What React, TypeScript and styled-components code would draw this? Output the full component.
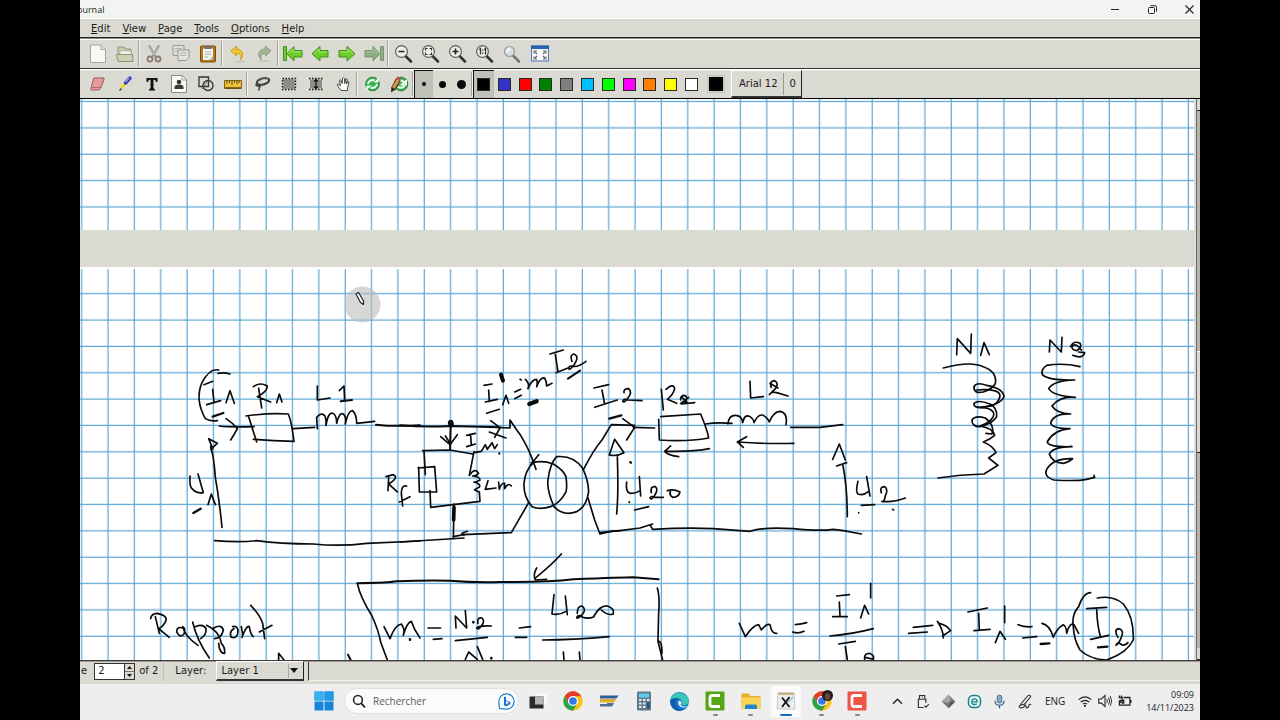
import React from 'react';
import styled, { createGlobalStyle, css } from 'styled-components';

const GlobalStyle = createGlobalStyle`
  * { box-sizing: border-box; }
  body { margin: 0; background: #000; }
  button, input, select { font: inherit; color: inherit; margin: 0; padding: 0; border: 0; background: none; border-radius: 0; }
  svg { display: block; flex: none; }
`;

const face = '#dadad2';
const uiFont = '"DejaVu Sans", sans-serif';
const winFont = '"Open Sans", "Noto Sans", sans-serif';

const Screen = styled.div`
  height: 100vh;
  padding: 0 80px;
  background: #000;
`;
const Desktop = styled.div`
  height: 100%;
  display: flex;
  flex-direction: column;
  overflow: hidden;
  background: ${face};
  color: #1a1a1a;
  font: 10px/14px ${uiFont};
`;
const TitleBar = styled.header`
  flex: none;
  height: 19px;
  display: flex;
  align-items: center;
  justify-content: space-between;
  background: #f3f4f1;
  border-bottom: 1px solid #fff;
  font-family: ${winFont};
`;
const Title = styled.span`
  margin-left: -3px;
  padding-top: 2px;
  font-size: 9px;
`;
const WindowButtons = styled.div`
  display: flex;
`;
const WindowButton = styled.button`
  width: 37px;
  height: 18px;
  display: flex;
  align-items: center;
  justify-content: center;
  &:last-child { width: 29px; padding-left: 8px; }
`;
const MenuBar = styled.nav`
  flex: none;
  height: 19px;
  display: flex;
  align-items: center;
  gap: 12px;
  padding-left: 11px;
  padding-top: 1px;
  border-bottom: 1px solid #222;
`;
const MenuItem = styled.button`
  line-height: 16px;
`;
const Toolbar = styled.div<{ $last?: boolean }>`
  flex: none;
  height: ${p => (p.$last ? 30 : 31)}px;
  display: flex;
  align-items: stretch;
  padding-left: 4px;
  border-top: 1px solid ${p => (p.$last ? '#fff' : '#8c8984')};
  border-bottom: 1px solid ${p => (p.$last ? '#000' : '#333')};
  box-shadow: inset 0 1px ${p => (p.$last ? '#e6e6e0' : '#fff')};
`;
const ToolButton = styled.button<{ $wide?: boolean }>`
  width: ${p => (p.$wide ? 31 : 27)}px;
  flex: none;
  display: flex;
  align-items: center;
  justify-content: center;
`;
const Divider = styled.span`
  flex: none;
  width: 2px;
  margin: 2px 0;
  border-left: 1px solid #a3a19b;
  border-right: 1px solid #f4f4f0;
`;
const pressed = css`
  background: #c0c0b9;
  box-shadow: inset 1px 1px #111;
`;
const DotButton = styled.button<{ $on?: boolean }>`
  width: 19px;
  flex: none;
  display: flex;
  align-items: center;
  justify-content: center;
  ${p => p.$on && pressed}
`;
const Dot = styled.span<{ $size: number }>`
  width: ${p => p.$size}px;
  height: ${p => p.$size}px;
  border-radius: 50%;
  background: #0a0a0a;
`;
const Swatches = styled.div`
  width: 229px;
  flex: none;
  display: flex;
`;
const SwatchButton = styled.button<{ $on?: boolean }>`
  flex: 1;
  display: flex;
  align-items: center;
  justify-content: center;
  ${p => p.$on && pressed}
`;
const Swatch = styled.span<{ $color: string }>`
  width: 13px;
  height: 13px;
  border: 1px solid #2a2a22;
  background: ${p => p.$color};
`;
const CurrentColor = styled.button`
  align-self: center;
  width: 18px;
  height: 18px;
  margin-left: 5px;
  margin-right: 6px;
  border: 2px solid #c9c9c2;
  background: #000;
`;
const FontButton = styled.button`
  width: 71px;
  flex: none;
  display: flex;
  align-items: center;
  border: 1px solid #fff;
  border-right: 1px solid #222;
  border-bottom: 2px solid #333;
`;
const FontName = styled.span`
  padding: 4px 5px 4px 7px;
  border-right: 1px solid #9a9892;
`;
const FontSize = styled.span`
  padding-left: 6px;
`;

const Work = styled.main`
  flex: 1 1 0;
  min-height: 0;
  display: flex;
`;
const Pages = styled.div`
  flex: 1;
  min-width: 0;
  display: flex;
  flex-direction: column;
  gap: 37px;
  overflow: hidden;
`;
const Paper = styled.section<{ $tail?: boolean }>`
  flex: ${p => (p.$tail ? 'none' : '1 1 0')};
  height: ${p => (p.$tail ? '131px' : 'auto')};
  min-height: 0;
  overflow: hidden;
  background: #fff;
  svg { width: 100%; height: 100%; }
`;
const ScrollBar = styled.div`
  flex: none;
  width: 6px;
  display: flex;
  flex-direction: column;
  border-left: 2px solid #dcdcd8;
  background: #b4b3ac;
  box-shadow: inset 1px 0 #6b6a66;
`;
const ScrollEnd = styled.button`
  height: 12px;
  flex: none;
  margin-left: 1px;
  background: ${face};
  border-bottom: 1px solid #222;
`;
const ScrollTrack = styled.div`
  flex: 1;
  margin-left: 1px;
  display: flex;
  flex-direction: column;
`;
const TrackSpace = styled.span<{ $share: number }>`
  flex: ${p => p.$share};
`;
const Thumb = styled.span`
  flex: 100;
  background: ${face};
  border-top: 1px solid #fff;
  border-bottom: 1px solid #222;
`;

const StatusBar = styled.footer`
  flex: none;
  height: 23px;
  display: flex;
  align-items: center;
  padding-bottom: 2px;
  border-top: 1px solid #3c3c3a;
  box-shadow: inset 0 1px #9c9b96;
`;
const PageLabel = styled.label`
  display: flex;
  align-items: center;
  gap: 7px;
  padding-left: 1px;
`;
const Spin = styled.span`
  width: 41px;
  height: 17px;
  display: flex;
  border: 1px solid #333;
  background: #fff;
`;
const SpinInput = styled.input`
  width: 29px;
  padding-left: 3px;
  outline: none;
`;
const SpinArrows = styled.span`
  flex: 1;
  display: flex;
  flex-direction: column;
  border-left: 1px solid #333;
  background: ${face};
`;
const SpinArrow = styled.button`
  flex: 1;
  display: flex;
  align-items: center;
  justify-content: center;
  & + & { border-top: 1px solid #777; }
`;
const PageTotal = styled.span`
  padding: 3px 5px 3px 4px;
  border-right: 1px solid #c0c0ba;
`;
const LayerLabel = styled.label`
  display: flex;
  align-items: center;
  gap: 10px;
  padding-left: 11px;
`;
const LayerBox = styled.span`
  width: 88px;
  height: 20px;
  display: flex;
  align-items: center;
  justify-content: space-between;
  border: 1px solid #fff;
  border-right: 1px solid #222;
  border-bottom: 2px solid #333;
`;
const LayerSelect = styled.select`
  appearance: none;
  width: 72px;
  padding-left: 4px;
  border-right: 1px solid #aaa8a2;
  outline: none;
`;
const LayerArrow = styled.span`
  padding-right: 5px;
`;
const Message = styled.output`
  align-self: stretch;
  flex: 1;
  margin: 1px 0 0 4px;
  border-left: 1px solid #333;
  border-bottom: 1px solid #f4f4f0;
`;

const TaskBar = styled.div`
  flex: none;
  height: 37px;
  display: flex;
  align-items: center;
  background: #eeeeee;
  border-top: 1px solid #d6d6d4;
  padding: 0 6px 2px 234px;
  font-family: ${winFont};
`;
const TaskButton = styled.button<{ $active?: boolean }>`
  flex: 1;
  height: 31px;
  display: flex;
  align-items: center;
  justify-content: center;
  position: relative;
  ${p => p.$active && css`
    background: linear-gradient(#fafafa, #fafafa) center / 30px 100% no-repeat;
  `}
`;
const Running = styled.span<{ $active?: boolean }>`
  position: absolute;
  bottom: 1px;
  width: ${p => (p.$active ? 12 : 5)}px;
  height: 2px;
  border-radius: 1px;
  background: ${p => (p.$active ? '#0f6cbd' : '#858585')};
`;
const Search = styled.label`
  width: 175px;
  height: 26px;
  flex: none;
  display: flex;
  align-items: center;
  margin-left: 10px;
  padding: 0 3px 0 7px;
  border: 1px solid #e0e0e0;
  border-radius: 13px;
  background: #fbfbfb;
`;
const SearchInput = styled.input`
  flex: 1;
  min-width: 0;
  padding-left: 7px;
  outline: none;
  &::placeholder { color: #5c5c5c; opacity: 1; }
`;
const Apps = styled.div`
  width: 355px;
  flex: none;
  display: flex;
  margin-left: 1px;
`;
const Tray = styled.div`
  display: flex;
  align-items: center;
  margin-left: auto;
`;
const TrayIcons = styled.div`
  width: 154px;
  display: flex;
`;
const Language = styled.button`
  width: 34px;
`;
const Network = styled.button`
  width: 54px;
  margin-left: 6px;
  margin-right: 14px;
  display: flex;
  align-items: center;
  justify-content: space-between;
`;
const Clock = styled.button`
  font-size: 9px;
  line-height: 13px;
  text-align: right;
`;
const ClockLine = styled.span`
  display: block;
`;

/* Toolbar icons */
const Icon = ({ children, size = 20 }: { children: React.ReactNode; size?: number }) => (
  <svg width={size} height={size} viewBox="0 0 20 20" fill="none" aria-hidden="true">{children}</svg>
);

const NewIcon = () => (
  <Icon><path d="M2.500 1H13l4.500 4.500V18.500H2.500z" fill="#f8f8f7" stroke="#a5a5a0" /><path d="M13 1V5.500h4.500" fill="#ddd" stroke="#a5a5a0" /></Icon>
);
const OpenIcon = () => (
  <Icon><path d="M3 16V3h6l1.500 2H16v5" fill="#c9ccae" stroke="#8e9474" /><path d="M5 7h11v5H5z" fill="#f2f2ec" stroke="#a0a590" strokeWidth=".6" /><path d="M1.500 10.500h16L18 17.500H3z" fill="#cdd1b2" stroke="#8e9474" /></Icon>
);
const CutIcon = () => (
  <Icon><path d="M5 1.500l6.500 11M15 1.500L8.500 12.500" stroke="#8d8d89" strokeWidth="2.200" /><path d="M5 2l6 9M15 2L9 11" stroke="#d0d0cc" strokeWidth=".8" /><circle cx="6" cy="15" r="2.500" stroke="#8f7d73" strokeWidth="1.800" /><circle cx="14" cy="15" r="2.500" stroke="#8f7d73" strokeWidth="1.800" /></Icon>
);
const CopyIcon = () => (
  <Icon><path d="M2 1.500h11v10H2z" fill="#dededa" stroke="#9a9a96" /><path d="M4 4.500h7M4 7h7" stroke="#b2b2ae" /><path d="M7 6h11v7.500L15 16.500H7z" fill="#e3e3df" stroke="#94948f" /><path d="M9 9h7M9 11.500h6" stroke="#b2b2ae" /></Icon>
);
const PasteIcon = () => (
  <Icon><rect x="2.500" y="2" width="15" height="16" rx="1" fill="#b5761c" stroke="#7c4d0c" /><path d="M5 4.500h10V16H5z" fill="#f4f4f2" /><path d="M7 8h6M7 10.500h6M7 13h3" stroke="#aaa" /><path d="M6.500 5V3q0-1 1-1H9q1-2 2 0h1.500q1 0 1 1v2z" fill="#70706a" /><path d="M15 12v4h-4z" fill="#bbb" /></Icon>
);
const UndoIcon = () => (
  <Icon><ellipse cx="13" cy="17.500" rx="5" ry="1" fill="#c4c4bc" /><path d="M4 7L9.500 2v3c6 0 8 6 4 11 1.500-4.500 0-6.500-4-6.500V12z" fill="#f2c52a" stroke="#c49310" strokeWidth=".8" /></Icon>
);
const RedoIcon = () => (
  <Icon><ellipse cx="10" cy="17" rx="6" ry="1" fill="#c6c7bd" /><path d="M17 7L11.500 2v3c-7 0-9 6-4 11-1.500-4.500 0-6.500 4-6.500V12z" fill="#9fb691" stroke="#81967a" strokeWidth=".8" /></Icon>
);
const ArrowIcon = ({ flip, bar, dull }: { flip?: boolean; bar?: boolean; dull?: boolean }) => (
  <svg width="22" height="20" viewBox="0 0 22 20" aria-hidden="true">
    <g transform={flip ? 'translate(22 0) scale(-1 1)' : undefined} fill={dull ? '#8ead83' : '#6ccc28'} stroke={dull ? '#789572' : '#41901a'} strokeLinejoin="round">
      {bar && <path d="M1.500 2.500h3v14h-3z" />}
      <path d={bar ? 'M5 9.700L12 2.500v4h8v6.500h-8v4z' : 'M3 9.700L11 2.500v4h8v6.500h-8v4z'} />
      <path d={bar ? 'M6.500 9.700L11 5v3h8' : 'M5 9.700L10 5v3h8'} fill="none" stroke={dull ? '#b0c7a6' : '#b6f07d'} strokeWidth=".8" />
    </g>
  </svg>
);
const LensIcon = ({ kind }: { kind: 'out' | 'fit' | 'in' | 'one' | 'set' }) => (
  <Icon>
    <path d="M12.500 12l5.500 5.500" stroke={kind === 'set' ? '#777' : '#333'} strokeWidth="2.600" strokeLinecap="round" />
    <circle cx="8.500" cy="7.500" r={kind === 'set' ? 5 : 5.9} fill={kind === 'set' ? '#d5dde4' : '#eeeeea'} stroke={kind === 'set' ? '#9a9a98' : '#5d5d5a'} strokeWidth="1.200" />
    {kind === 'out' && <path d="M5.500 7.500h6" stroke="#222" strokeWidth="1.500" />}
    {kind === 'in' && <path d="M5.500 7.500h6M8.500 4.500v6" stroke="#222" strokeWidth="1.600" />}
    {kind === 'fit' && <path d="M5.500 6.500V4.500h2M9.500 4.500h2v2M11.500 8.500v2h-2M7.500 10.500h-2v-2" stroke="#333" strokeWidth="1.100" />}
    {kind === 'one' && <path d="M5.200 5.500l1.300-1V10.500M10.200 5.500l1.300-1V10.500M8.700 5.500v1.200M8.700 8.500v1.200" stroke="#333" strokeWidth="1.300" />}
    {kind === 'set' && <path d="M6 8.500q0-3 3-4" stroke="#fff" strokeWidth="1.500" />}
  </Icon>
);
const FullIcon = () => (
  <Icon><rect x="1.500" y="2" width="17" height="15" fill="#f5f7fa" stroke="#4775b5" /><path d="M1 1.500h18V5H1z" fill="#2b62ae" /><path d="M4 9.500V7h3M13 7h3v2.500M16 12.500V15h-3M7 15H4v-2.500M5 8l2 2M15 8l-2 2M15 14l-2-2M5 14l2-2" stroke="#666" strokeWidth="1.100" /></Icon>
);
const EraserIcon = () => (
  <Icon><path d="M6.500 4h9q1 0 .5 1.200l-3.500 9.300q-.5 1.500-2 1.500h-7q-1 0-.5-1.500L5.500 5q.2-1 1-1z" fill="#ea9a9a" stroke="#91595c" /><path d="M3 13.500h9.500l3.500-8" stroke="#b56d70" /></Icon>
);
const HighlighterIcon = () => (
  <Icon><path d="M6.500 14l5-6" stroke="#e6dd27" strokeWidth="3.500" /><path d="M10.500 9l4.500-5" stroke="#3a3fb5" strokeWidth="3.500" strokeLinecap="round" /><path d="M10.500 8l3.500-4" stroke="#a2a8f2" strokeWidth="1.200" /><path d="M4.500 16.500l2-2" stroke="#333" strokeWidth="1.300" /></Icon>
);
const TextIcon = () => (
  <Icon><path d="M4.500 4h11v4H14q-.3-2-1.500-2.200h-1V14q0 1 1.500 1.200V16.500H7V15.200q1.500-.2 1.500-1.200V5.800h-1Q6.300 6 6 8H4.500z" fill="#111" /></Icon>
);
const ImageIcon = () => (
  <Icon><path d="M2.500 1.500h11l4 4v13h-15z" fill="#fafaf8" stroke="#888" /><path d="M13 1.500V6h4.500" stroke="#999" /><circle cx="10" cy="8" r="2.300" fill="#333" /><path d="M5.500 15v-2q0-2.500 4.500-2.500t4.500 2.500v2z" fill="#3a3a3a" /></Icon>
);
const ShapesIcon = () => (
  <Icon><path d="M3 3h9.500v9.500H3z" stroke="#333" strokeWidth="1.300" /><circle cx="12" cy="11.500" r="5" stroke="#333" strokeWidth="1.300" /><path d="M6 15L13 5" stroke="#555" strokeWidth=".8" /></Icon>
);
const RulerIcon = () => (
  <Icon><path d="M1.500 6.500h17v8h-17z" fill="#edc23a" stroke="#80601a" /><path d="M2 14h16" stroke="#654a12" strokeWidth="1.500" /><path d="M4 7v3M6.500 7v2M9 7v4M11.500 7v2M14 7v3M16 7v2" stroke="#5a4614" /></Icon>
);
const LassoIcon = () => (
  <Icon><ellipse cx="11" cy="7.500" rx="6.300" ry="3" stroke="#444" strokeWidth="2.200" transform="rotate(-15 11 7.500)" /><path d="M4.500 9.500q-1.500 3 2 2.500 2 1 0 4.500M5 10.500l4 2" stroke="#444" strokeWidth="1.500" /><path d="M6 8q5-4 10-3" stroke="#bbb" strokeWidth=".8" /></Icon>
);
const RectSelectIcon = () => (
  <Icon><path d="M3.500 4.500h13v11h-13z" fill="#8b8b87" stroke="#dadad2" strokeWidth="1.400" /><path d="M3.500 4.500h13v11h-13z" stroke="#111" strokeWidth="1.400" strokeDasharray="1.500 1.500" /></Icon>
);
const VerticalSpaceIcon = () => (
  <Icon><path d="M4 5.500h12v9H4z" fill="#8e8e8a" /><path d="M3 4.500h14M3 15.500h14" stroke="#111" strokeWidth="1.300" strokeDasharray="1.500 1.500" /><path d="M10 6v8M8 7.500L10 5.500 12 7.500M8 12.500l2 2 2-2" stroke="#111" strokeWidth="1.200" /></Icon>
);
const HandIcon = () => (
  <Icon><path d="M8 16.500l-3.500-5q-1-1.500 1-1.500l2 2-1-5.500q.5-1.500 1.600 0l1 3 .4-5q1-1.500 2 0l.3 5 1-4.500q1.300-1 1.300 1l-.6 4 1.200-2.500q1.400-.5 1.200 1.500L14.500 14v2.500z" fill="#fff" stroke="#333" strokeWidth=".9" /></Icon>
);
const DefaultIcon = ({ pen }: { pen?: boolean }) => (
  <Icon>
    <circle cx={pen ? 12 : 10.5} cy="10" r="6.800" fill="#35b24d" stroke="#228138" />
    <path d={pen ? 'M9 12.500a4 4 0 0 0 6.500-1' : 'M6 10a4.500 4.500 0 0 1 6.500-3.500'} stroke="#f2fff2" strokeWidth="2" />
    <path d={pen ? 'M10 7a4 4 0 0 1 5 1l-2 2.500h4V6' : 'M15 10a4.500 4.500 0 0 1-6.500 3.500'} stroke="#f2fff2" strokeWidth="2" />
    {!pen && <path d="M11.500 8.500h5V4zM9.500 11.500h-5V16z" fill="#f2fff2" />}
    {pen && <><path d="M4 15.500L9.500 5" stroke="#5e4220" strokeWidth="5" /><path d="M4.500 14L9.500 5" stroke="#d29958" strokeWidth="2.800" /><path d="M9 6l1.300-2.600" stroke="#bc5555" strokeWidth="4.500" /><path d="M2.500 13.500L2 18.500 6 15.500z" fill="#222" /></>}
  </Icon>
);

/* Handwriting: every group holds strokes traced at three units to the pixel. */
type Stroke = string | [string, number];
const ink: { x: number; y: number; strokes: Stroke[] }[] = [
  { x: 180, y: 340, strokes: [
    'M116 90C95 85 78 105 66 128C52 160 56 200 76 236Q90 245 112 242', 'M72 134L98 124M114 100Q130 97 150 102M98 148L102 186M80 194L122 182',
    ['M98 230L130 219', 7], 'M138 188L150 152L163 190', 'M118 258Q150 262 222 260M138 236Q160 250 172 266Q165 280 152 300',
    'M220 140Q240 125 262 138Q262 155 232 170L272 186M236 145L245 204M290 188L298 162L306 186',
    'M198 228Q270 218 325 222Q335 245 342 304Q280 302 220 298M206 230L230 306', 'M340 266L404 262',
    'M412 138L412 180L450 174M478 152L492 138L494 182', ['M482 184L516 180', 6],
    'M412 266L410 232Q425 215 435 228Q440 240 438 256Q445 215 458 220Q470 225 470 250Q478 215 490 222Q500 230 496 252Q505 210 518 212Q530 225 530 250L584 244',
    'M126 562Q118 480 106 412Q102 350 92 320M98 326L86 296L112 310L92 328', 'M30 408Q28 440 36 446Q50 462 70 458M54 402L70 458M84 494L94 462L106 494', ['M40 519L62 506', 7],
    'M104 602Q180 608 230 602Q300 612 400 612Q480 620 560 610L720 603', ['M588 254Q640 260 720 256', 6],
    'M618 410L640 404Q658 412 626 432L652 456M626 412L624 452M680 438Q664 434 664 460L668 498M658 486L690 470',
  ] },
  { x: 400, y: 340, strokes: [
    ['M0 256Q80 262 150 258L300 262', 6], 'M290 262L330 264L330 240Q350 270 362 286Q385 325 394 350L408 388M392 374L416 344',
    ['M152 248L153 252', 17], ['M152 258L150 330', 6], ['M122 290L150 314L172 284M136 288L152 312', 5],
    'M68 332L150 330L218 342M222 335L208 406M72 332L76 404M54 384L104 380L110 456L58 456L56 382M90 452L92 502L240 484L238 456',
    'M210 404Q225 382 236 400Q230 408 218 408Q240 410 240 420Q225 428 222 426Q245 432 238 442Q225 448 224 450L238 456',
    'M264 422L256 448L288 444M296 426L298 448Q304 428 314 430L314 446Q324 426 334 438',
    'M162 492L160 596', ['M162 502L161 540', 11], 'M0 606L192 594M160 590L190 584L334 578L386 488M202 574L186 580L192 586',
    'M200 286L226 280M212 288L214 316M200 320L226 312M222 338L244 334L256 314L262 328L276 308L284 326L292 314', ['M298 340v1', 6],
    'M272 242Q290 255 300 264L284 292M268 276L318 294', 'M252 136L276 132M266 150L268 184M256 186L292 178M308 194L318 166L326 190', ['M303 104L309 122', 12], ['M260 220L298 208', 5],
    'M344 156L362 148M344 176L364 166M360 118l4 2', 'M376 118Q390 130 384 146Q395 118 410 118Q414 130 410 140Q420 112 434 114Q440 125 440 138L456 130', ['M388 192L410 184', 13],
    'M450 42L490 30M466 44L474 96M468 98L504 84M516 64Q508 44 522 42Q536 48 528 64Q518 84 508 88Q504 78 514 78Q532 84 558 64', ['M504 116L540 92', 6],
    'M394 368Q430 360 460 372Q490 390 498 410Q502 440 498 456Q480 490 452 500Q420 510 396 500Q370 470 372 430Q376 390 400 368',
    'M470 350Q520 345 548 385Q565 420 566 455Q560 500 530 515Q490 530 462 500Q440 450 444 420Q450 370 470 350', 'M550 390Q580 330 606 300L634 254L704 256',
    'M564 474L584 540L600 582Q640 572 660 572M582 144L626 134M606 150L614 192M584 202L652 180', ['M628 236L664 226', 7], 'M668 236L704 262L680 300',
    'M650 522Q656 460 652 346M628 345L644 298L672 338Q650 350 628 345M690 366l4 2', 'M484 642Q460 670 404 716M410 684Q398 705 406 720L440 718',
  ] },
  { x: 620, y: 360, strokes: [
    'M12 98Q10 86 26 86Q38 96 24 114Q12 130 8 124Q10 114 24 120L66 122M40 202L104 204', 'M20 366Q16 396 30 400Q46 402 60 392M58 350L62 408M94 398Q90 378 106 380Q116 388 104 406Q94 422 90 414Q94 406 104 412L130 412M142 392Q160 386 180 396Q176 412 158 412Q146 405 152 392',
    ['M28 426v1M32 307v1', 6], ['M44 450L86 440', 5], 'M0 512L60 504L98 492M92 498L98 508Q200 502 280 506L390 514Q430 500 520 506Q600 514 640 508L670 512L724 522M0 512Q-30 514 -60 518',
    'M124 88L130 150M138 88Q160 68 164 86Q160 104 142 118L170 130M182 120Q180 106 194 106Q206 112 194 128L184 132L224 128M184 110L204 130M182 130L206 112',
    'M116 178L118 240Q200 246 266 234Q262 210 242 162L122 170M256 192Q290 186 336 190', 'M324 192Q326 166 346 166Q366 166 368 188Q374 160 390 170Q400 176 402 188Q415 160 430 166Q445 176 448 186Q460 155 480 154Q504 158 498 194',
    'M512 202L600 202L668 194M268 266Q220 276 136 274M152 258L134 274Q145 286 176 290M522 250Q430 252 352 246M380 230L352 246L370 262',
    'M390 64L392 114L430 110M454 82Q446 64 464 62Q478 70 466 86L448 104Q454 94 470 98L504 108M450 70L474 84', 'M682 470Q682 380 668 312M650 318L680 308M638 298L658 252L676 300',
    'M714 364Q706 396 714 402Q730 408 744 396M740 350L750 408M784 398Q778 380 794 380Q806 388 796 408Q792 430 786 424Q820 428 856 414', ['M724 436L764 434', 5], ['M716 458v1M818 448l3 2', 5],
  ] },
  { x: 920, y: 320, strokes: [
    'M110 104L112 56L152 100L154 42M182 106L192 68L208 104', 'M70 144Q150 122 190 140Q232 155 226 190Q220 205 190 216Q160 222 162 200Q170 185 200 196Q250 205 252 230Q245 250 200 260Q160 268 162 250Q175 238 210 252Q232 262 230 290Q220 310 180 320Q155 320 156 300Q165 285 196 294Q225 315 216 342L198 340',
    'M170 210Q240 205 240 228Q236 250 214 258Q180 262 175 262C240 262 232 300 180 318Q220 325 224 346Q210 358 190 366Q220 378 228 398L206 414L234 436L192 462Q120 464 54 474',
    'M388 96L390 60L424 96L426 52', ['M452 80Q460 60 480 70Q488 82 470 92Q455 90 456 80Q466 65 484 90M476 96L494 98Q490 118 458 106', 5],
    'M480 140Q430 128 380 136Q360 150 368 165Q390 182 464 180Q400 182 386 206Q400 228 466 232Q420 228 396 258Q410 280 452 282Q400 280 392 310Q400 326 450 326Q400 330 382 366Q385 382 456 380Q400 380 388 402Q396 428 430 430Q450 425 458 416Q400 414 380 448Q370 470 402 480Q470 484 500 478L524 472L522 466',
  ] },
  { x: 80, y: 560, strokes: [
    'M212 176Q214 160 232 160Q262 166 258 182Q250 200 236 206L268 232M226 170L238 220M308 204Q290 198 290 216Q300 236 312 222Q318 205 308 200Q315 230 354 256',
    'M338 186Q350 240 388 294M346 200Q370 190 378 206Q380 225 362 236M380 196Q420 215 424 250Q436 262 434 280Q418 280 416 250M398 206Q425 190 430 210Q425 235 404 236',
    'M462 206Q446 214 454 232Q474 238 474 210Q470 196 458 200M484 200Q490 228 486 232Q500 195 508 200Q512 225 520 230M512 136Q540 165 548 190L554 236M538 216L576 196M596 300L596 280L612 300', ['M804 284L812 300', 6],
  ] },
  { x: 340, y: 560, strokes: [
    ['M52 70Q150 68 170 64Q260 60 330 62Q400 68 480 66Q620 68 700 58Q850 52 880 52L956 58', 6], 'M52 70Q60 110 96 168Q115 210 122 246L142 300', ['M952 84Q960 110 956 160L954 244L968 300M954 244Q966 240 966 280', 5],
    'M132 200L150 236Q165 195 184 192Q196 208 190 226Q200 188 214 184Q222 210 240 234M264 204L302 204M280 238L306 236', ['M210 238v1M400 186v1M454 294v1', 8],
    'M348 204L346 168L380 204L376 152M414 190Q410 172 426 174Q436 184 424 198Q414 212 410 204Q418 196 454 198M376 298L386 276L412 298M412 260L428 298', ['M346 242L442 232', 5],
    'M538 204L572 200M526 232L560 232M642 104L636 162Q660 166 678 154M676 108L682 164M712 160Q712 138 726 138Q740 148 728 162Q712 180 710 172Q716 162 728 172Q745 178 762 170M762 168Q780 136 802 138Q824 145 820 162Q804 168 784 150', ['M608 240Q700 240 808 230', 5], 'M670 276L672 298M718 276L720 298',
  ] },
  { x: 660, y: 560, strokes: [
    'M238 190L256 230Q280 195 296 194L304 210Q320 190 330 194Q335 222 350 220M406 194Q425 192 440 188M398 216Q415 222 432 214M530 108L568 104M538 126L540 168', ['M518 170L562 170', 5],
    'M602 174L614 136L626 162M632 70L632 114', ['M510 228Q580 222 640 206', 5], 'M536 252L586 244M556 260L562 298M614 298Q612 280 628 280Q644 285 640 298L616 292', 'M760 202L818 196M746 220L802 216M832 184Q850 210 850 234M838 190Q860 195 872 212L848 228',
  ] },
  { x: 900, y: 560, strokes: [
    'M204 156L262 144M236 160L238 210M222 212L270 208M314 138L314 188M286 248L300 214L316 238', 'M354 194Q375 202 396 200M368 234L410 230', ['M422 252L448 250', 7],
    'M426 190Q450 195 460 232Q470 205 490 194Q500 200 500 220Q510 185 522 194L536 220', 'M572 98Q550 98 536 140Q514 165 520 200Q522 240 540 270Q570 298 620 300Q680 280 700 240Q702 170 670 132Q640 105 592 114',
    'M560 146L620 142M590 148Q592 200 602 232M572 238L626 226', ['M594 262L622 260', 7], 'M654 232Q640 210 656 206Q674 210 664 232Q656 252 648 256Q652 244 662 252Q674 260 684 248',
  ] },
];

const Grid = ({ id, top, start }: { id: string; top: number; start: number }) => (
  <>
    <defs>
      <pattern id={id} x={-11.3} y={top - 13} width="26.35" height="26.35" patternUnits="userSpaceOnUse">
        <path d="M13 0V26.350M0 13H26.350" stroke="#5ba6d6" strokeWidth="1.200" />
      </pattern>
    </defs>
    <rect y={start} width="100%" height="100%" fill={`url(#${id})`} />
  </>
);

const Ink = () => (
  <g transform="translate(-80 -267)" fill="none" stroke="#0a0a0a" strokeLinecap="round" strokeLinejoin="round">
    {ink.map(group => (
      <g key={`${group.x}-${group.y}`} transform={`translate(${group.x} ${group.y}) scale(.3333)`}>
        {group.strokes.map((s, i) => (
          <path key={i} d={typeof s === 'string' ? s : s[0]} strokeWidth={typeof s === 'string' ? 5 : s[1]} />
        ))}
      </g>
    ))}
    <circle cx="362.500" cy="304.500" r="18" fill="#bdbdbd" fillOpacity=".6" stroke="none" />
    <path d="M356 294l2.500-1.500 5 8.500v3.500l-3-2z" fill="#fff" stroke="#222" strokeWidth="1.200" />
  </g>
);

/* Taskbar icons */
const WindowsLogo = () => (
  <Icon><path d="M.5.5h9v9h-9zM10.500.5h9v9h-9zM.5 10.500h9v9h-9zM10.500 10.500h9v9h-9z" fill="#1487dc" /><path d="M.5.5h9v9h-9z" fill="#37b1ef" /><path d="M10.500.5h9v9h-9z" fill="#2199e4" /></Icon>
);
const TaskViewIcon = () => (
  <Icon><path d="M7 2.500h12v11H7z" fill="#fafafa" /><path d="M1.500 5.500h14v12h-14z" fill="#2b2b2b" /><path d="M7 5.500h8.500v8H7z" fill="#b5b5b5" /></Icon>
);
const ChromeIcon = ({ avatar }: { avatar?: boolean }) => (
  <Icon size={22}>
    <circle cx="10" cy="10" r="8.800" fill="#fbc116" />
    <path d="M2.400 5.600A8.800 8.800 0 0 1 17.600 5.600H10L6.200 12.200z" fill="#e33b2e" />
    <path d="M2.400 5.600A8.800 8.800 0 0 0 10 18.800L13.800 12.200H6.200z" fill="#2ba24c" />
    <circle cx="10" cy="10" r="4.600" fill="#fff" /><circle cx="10" cy="10" r="3.500" fill="#3478e5" />
    {avatar && <><circle cx="15" cy="5" r="5" fill="#241b1b" /><ellipse cx="15" cy="6" rx="2.500" ry="3" fill="#6c473c" /></>}
  </Icon>
);
const BankIcon = () => (
  <Icon><path d="M1 4.500h18.500l-2 3H1z" fill="#2b5f96" /><path d="M1 8h16l-2 3.500H1z" fill="#dfae2c" /><path d="M8 12h7l-2 3.500H1V13h7z" fill="#4a7195" /></Icon>
);
const CalcIcon = () => (
  <Icon><rect x="3" y=".5" width="14" height="19" rx="1" fill="#62798a" /><path d="M5 2.500h10v4H5z" fill="#58cff0" /><path d="M5 9h2.500M9 9h2.500M13 9h2.500M5 12.500h2.500M9 12.500h2.500M5 16h2.500M9 16h2.500" stroke="#e5edf2" strokeWidth="2.200" /><path d="M13 11.500h2.500v6H13z" fill="#144f85" /></Icon>
);
const EdgeIcon = () => (
  <Icon size={21}><circle cx="10" cy="10" r="9" fill="#1678cc" /><path d="M1.200 9A9 9 0 0 1 19 9.500Q18.500 14 13 13.500q-2-.5-1-2Q12.500 8 9 7 4 6 1.200 9z" fill="#38c7b5" /><path d="M1.200 9Q5 6 9 7 5 9 6.500 13q2 5 8 4.600Q10 20 6 18 1 15 1.200 9z" fill="#125da8" /><path d="M9.500 9q-2 3 1.500 6 3.500 1.500 6.500-.5-5 1-6.500-1.500.8-1 .8-2-.6-1.800-2.300-2z" fill="#eef6fb" /></Icon>
);
const CamtasiaIcon = ({ color }: { color: string }) => (
  <Icon><rect x=".5" y=".5" width="19" height="19" rx="1" fill={color} /><path d="M15 4.500H7Q5 4.500 5 7v6q0 2.500 2 2.500h8" stroke="#fff" strokeWidth="2.800" /></Icon>
);
const FolderIcon = () => (
  <Icon><path d="M.5 2.500h7l2 2.500h9.500q.5 0 .5.800V18H.5z" fill="#e9ad2a" /><path d="M.5 6.500h19V18H.5z" fill="#fbd45c" /><path d="M4 18v-3q0-1.500 1.500-1.500h9q1.500 0 1.500 1.500v3z" fill="#2286c7" /></Icon>
);
const XournalIcon = () => (
  <Icon><path d="M2 2h16l1 16H1z" fill="#eceeed" stroke="#b7b9b6" strokeWidth=".7" /><path d="M2 1.500h16V4H2z" fill="#c7b37e" /><path d="M6 6.500l7.500 9.500M13.500 6L6 16" stroke="#111" strokeWidth="1.800" /><path d="M11 12l6-6" stroke="#86b6d9" strokeWidth="1.200" /></Icon>
);
const GlassIcon = () => (
  <Icon size={14}><circle cx="8.500" cy="8.500" r="6.300" stroke="#222" strokeWidth="2.200" /><path d="M13 13l5.500 6" stroke="#222" strokeWidth="2.600" /></Icon>
);
const BingIcon = () => (
  <Icon size={17}><path d="M2 18.500Q1 14 1 10A9 9 0 1 1 10 19Q5 18.500 2 18.500z" fill="#fff" stroke="#1d80ca" strokeWidth="1.500" /><path d="M7 4v10.500l2.500 1.500 5-3v-2.500L9.500 8.500V5z" fill="#1774cf" /><path d="M9.500 9.500l3.500 1.500-3.500 2.500z" fill="#fff" /></Icon>
);
const TrayIcon = ({ kind }: { kind: string }) => (
  <Icon size={15}>
    {kind === 'Show hidden icons' && <path d="M4 13l6-6 6 6" stroke="#222" strokeWidth="1.800" />}
    {kind === 'USB' && <><path d="M6 2h7v5H6zM4.500 7h10v11h-10z" stroke="#333" strokeWidth="1.600" /><path d="M9 4h1.500" stroke="#333" strokeWidth="1.500" /><circle cx="15" cy="15.500" r="4" fill="#eee" /><path d="M12.500 15.500l2 2 4-4" stroke="#333" strokeWidth="1.500" /></>}
    {kind === 'Driver' && <><path d="M10 1l9 9-9 9-9-9z" fill="#777" /><path d="M10 1L1 10l9 2 3-5z" fill="#a6a6a6" /><path d="M10 19l9-9-7 1z" fill="#555" /></>}
    {kind === 'Antivirus' && <><rect x="2" y="2" width="16" height="16" rx="6" fill="#e9f7f6" stroke="#168489" strokeWidth="2" /><path d="M6.500 10.500h7Q13.500 6.500 10 6.500T6.500 10.500 10 14q2 0 3-1" stroke="#168489" strokeWidth="1.800" /></>}
    {kind === 'Microphone' && <><rect x="7" y="1.500" width="6" height="10.500" rx="3" fill="#8ba8c8" stroke="#3b638f" strokeWidth="1.200" /><path d="M4 9q0 6 6 6t6-6M10 15v4" stroke="#35577e" strokeWidth="1.600" /></>}
    {kind === 'Pen' && <path d="M4 13L13 2.500q3-2 4 1L9 13q-4 3-5 0zM4 14q-5 4 0 4.500 4 0 5-3t2 3q3 0 3.500-3t3-1" stroke="#333" strokeWidth="1.400" />}
  </Icon>
);

const colors = [
  ['Black', '#000000'], ['Blue', '#3333cc'], ['Red', '#ff0000'], ['Green', '#008000'], ['Gray', '#808080'], ['Light blue', '#00c0ff'],
  ['Light green', '#00ff00'], ['Magenta', '#ff00ff'], ['Orange', '#ff8000'], ['Yellow', '#ffff00'], ['White', '#ffffff'],
];
const fileTools: [string, React.ReactNode][][] = [
  [['New', <NewIcon />], ['Open', <OpenIcon />]],
  [['Cut', <CutIcon />], ['Copy', <CopyIcon />], ['Paste', <PasteIcon />]],
  [['Undo', <UndoIcon />], ['Redo', <RedoIcon />]],
  [['First page', <ArrowIcon bar />], ['Previous page', <ArrowIcon />], ['Next page', <ArrowIcon flip />], ['Last page', <ArrowIcon flip bar dull />]],
  [['Zoom out', <LensIcon kind="out" />], ['Page width', <LensIcon kind="fit" />], ['Zoom in', <LensIcon kind="in" />], ['Normal size', <LensIcon kind="one" />], ['Set zoom', <LensIcon kind="set" />], ['Fullscreen', <FullIcon />]],
];
const penTools: [string, React.ReactNode][][] = [
  [['Eraser', <EraserIcon />], ['Highlighter', <HighlighterIcon />], ['Text', <TextIcon />], ['Image', <ImageIcon />], ['Shapes', <ShapesIcon />], ['Ruler', <RulerIcon />]],
  [['Select region', <LassoIcon />], ['Select rectangle', <RectSelectIcon />], ['Vertical space', <VerticalSpaceIcon />], ['Hand', <HandIcon />]],
  [['Default', <DefaultIcon />], ['Default pen', <DefaultIcon pen />]],
];
const apps: { name: string; icon: React.ReactNode; running?: boolean; active?: boolean }[] = [
  { name: 'Task view', icon: <TaskViewIcon /> },
  { name: 'Chrome', icon: <ChromeIcon /> },
  { name: 'Finance', icon: <BankIcon /> },
  { name: 'Calculator', icon: <CalcIcon /> },
  { name: 'Edge', icon: <EdgeIcon /> },
  { name: 'Camtasia', icon: <CamtasiaIcon color="#55a515" />, running: true },
  { name: 'Files', icon: <FolderIcon />, running: true },
  { name: 'Journal', icon: <XournalIcon />, running: true, active: true },
  { name: 'Chrome profile', icon: <ChromeIcon avatar />, running: true },
  { name: 'Recorder', icon: <CamtasiaIcon color="#ee5542" />, running: true },
];

const ToolGroups = ({ groups }: { groups: [string, React.ReactNode][][] }) => (
  <>
    {groups.map((group, i) => (
      <React.Fragment key={i}>
        {i > 0 && <Divider />}
        {group.map(([name, icon]) => (
          <ToolButton key={name} aria-label={name} $wide={name === 'Fullscreen'}>{icon}</ToolButton>
        ))}
      </React.Fragment>
    ))}
  </>
);

export default function App() {
  return (
    <>
      <GlobalStyle />
      <Screen>
        <Desktop>
          <TitleBar>
            <Title>ournal</Title>
            <WindowButtons>
              <WindowButton aria-label="Minimize"><svg width="9" height="9" viewBox="0 0 9 9"><path d="M0 4.500h8" stroke="#222" /></svg></WindowButton>
              <WindowButton aria-label="Restore"><svg width="9" height="9" viewBox="0 0 9 9" fill="none" stroke="#222"><rect x=".5" y="2.500" width="6" height="6" rx="1" /><path d="M2.500.7h4.500q1.500 0 1.500 1.500V6.500" /></svg></WindowButton>
              <WindowButton aria-label="Close"><svg width="9" height="9" viewBox="0 0 9 9"><path d="M.5.5l8 8M8.500.5l-8 8" stroke="#222" strokeWidth="1.100" /></svg></WindowButton>
            </WindowButtons>
          </TitleBar>
          <MenuBar>
            {['Edit', 'View', 'Page', 'Tools', 'Options', 'Help'].map(m => <MenuItem key={m}><u>{m[0]}</u>{m.slice(1)}</MenuItem>)}
          </MenuBar>
          <Toolbar><ToolGroups groups={fileTools} /></Toolbar>
          <Toolbar $last>
            <ToolGroups groups={penTools} />
            <Divider />
            <DotButton aria-label="Fine" $on><Dot $size={4} /></DotButton>
            <DotButton aria-label="Medium"><Dot $size={7} /></DotButton>
            <DotButton aria-label="Thick"><Dot $size={9} /></DotButton>
            <Divider />
            <Swatches>
              {colors.map(([name, color], i) => (
                <SwatchButton key={name} aria-label={name} $on={i === 0}><Swatch $color={color} /></SwatchButton>
              ))}
            </Swatches>
            <CurrentColor aria-label="Current color" />
            <FontButton><FontName>Arial 12</FontName><FontSize>0</FontSize></FontButton>
          </Toolbar>
          <Work>
            <Pages>
              <Paper $tail><svg><Grid id="grid-a" top={2.5} start={0} /></svg></Paper>
              <Paper><svg><Grid id="grid-b" top={0.3} start={2} /><Ink /></svg></Paper>
            </Pages>
            <ScrollBar>
              <ScrollEnd aria-label="Scroll up" />
              <ScrollTrack><TrackSpace $share={241} /><Thumb /><TrackSpace $share={196} /></ScrollTrack>
              <ScrollEnd aria-label="Scroll down" />
            </ScrollBar>
          </Work>
          <StatusBar>
            <PageLabel>
              e
              <Spin>
                <SpinInput defaultValue="2" aria-label="Page" />
                <SpinArrows>
                  <SpinArrow aria-label="Next"><svg width="5" height="3"><path d="M0 3L2.500 0 5 3z" fill="#111" /></svg></SpinArrow>
                  <SpinArrow aria-label="Previous"><svg width="5" height="3"><path d="M0 0L2.500 3 5 0z" fill="#111" /></svg></SpinArrow>
                </SpinArrows>
              </Spin>
            </PageLabel>
            <PageTotal>of 2</PageTotal>
            <LayerLabel>
              Layer:
              <LayerBox>
                <LayerSelect><option>Layer 1</option></LayerSelect>
                <LayerArrow><svg width="8" height="5"><path d="M0 0h8L4 5z" fill="#111" /></svg></LayerArrow>
              </LayerBox>
            </LayerLabel>
            <Message />
          </StatusBar>
          <TaskBar>
            <button aria-label="Start"><WindowsLogo /></button>
            <Search>
              <GlassIcon />
              <SearchInput placeholder="Rechercher" aria-label="Rechercher" />
              <BingIcon />
            </Search>
            <Apps>
              {apps.map(a => (
                <TaskButton key={a.name} aria-label={a.name} $active={a.active}>
                  {a.icon}
                  {a.running && <Running $active={a.active} />}
                </TaskButton>
              ))}
            </Apps>
            <Tray>
              <TrayIcons>
                {['Show hidden icons', 'USB', 'Driver', 'Antivirus', 'Microphone', 'Pen'].map(k => (
                  <TaskButton key={k} aria-label={k}><TrayIcon kind={k} /></TaskButton>
                ))}
              </TrayIcons>
              <Language>ENG</Language>
              <Network aria-label="Network, sound and battery">
                <Icon size={14}><path d="M1 8q9-8 18 0M4 11.500q6-5 12 0M7 14.500q3-2.500 6 0" stroke="#222" strokeWidth="1.600" /><circle cx="10" cy="17" r="1.500" fill="#222" /></Icon>
                <Icon size={14}><path d="M1 7h4l5-5v16l-5-5H1z" stroke="#222" strokeWidth="1.500" /><path d="M12.500 7q2 3 0 6M15 5q3.500 5 0 10M17.500 3q4 7 0 14" stroke="#222" strokeWidth="1.300" /></Icon>
                <Icon size={14}><path d="M8 5h9v11H2V9M18.500 8.500v4" stroke="#222" strokeWidth="1.800" /><path d="M2 2v3M5 2v3M1 5h5v4H3.500v4" stroke="#222" strokeWidth="1.800" /><path d="M5 14V10l4-3v7z" fill="#222" /></Icon>
              </Network>
              <Clock><ClockLine>09:09</ClockLine><ClockLine>14/11/2023</ClockLine></Clock>
            </Tray>
          </TaskBar>
        </Desktop>
      </Screen>
    </>
  );
}
